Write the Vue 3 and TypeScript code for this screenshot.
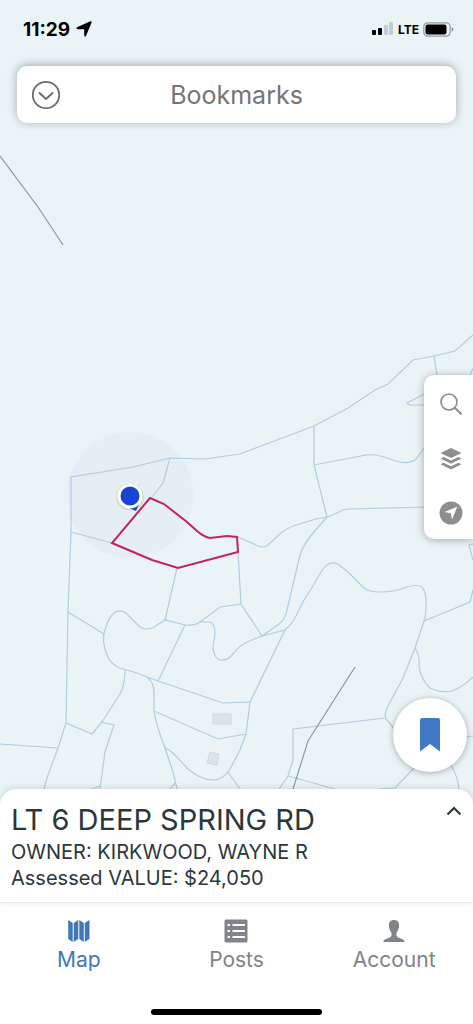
<script setup lang="ts">
import { ref } from 'vue'

interface Tab {
  id: string
  label: string
}

const tabs: Tab[] = [
  { id: 'map', label: 'Map' },
  { id: 'posts', label: 'Posts' },
  { id: 'account', label: 'Account' },
]
const activeTab = ref('map')

const parcelLines: string[] = [
  'M44 789L47 778L58 748L66 723L68 610L71 532V477L133 467L170 458L205 459L240 454L314 426L348 408L375 390L388 384L413 360L434 356L455 351L473 335',
  'M434 356L437 375',
  'M473 368L470 375',
  'M430 391L407 403Q408 405 412 405H430',
  'M314 426V465L327 517',
  'M314 465L366 455Q376 454 384 457L396 461Q409 465 416 459L430 440',
  'M430 507L348 509Q343 509 339 512L328 517L316 519L296 525Q287 528 281 533L268 545Q263 549 256 545L238 537',
  'M327 517L313 533Q303 545 300 555L287 610Q285 620 279 624L262 636',
  'M238 552L241 604L262 636',
  'M241 604L220 607L200 622Q195 626 185 625L165 620L154 627Q147 631 140 627L128 615Q121 608 114 613Q108 618 105 630Q101 640 107 655Q110 664 120 668L137 673L158 681L223 703L250 702',
  'M165 620L177 568',
  'M185 625L158 681',
  'M200 622H210Q215 624 215 633L213 648Q214 658 220 660Q227 661 232 655Q240 645 247 642L262 636L285 630',
  'M285 630L250 702L246 734L240 750L230 769Q223 780 213 780Q202 780 189 770L174 754Q170 750 165 748',
  'M285 630Q292 624 296 616Q302 602 311 589L323 569Q330 560 338 564L349 573L364 588Q369 592 380 592Q395 592 407 587Q417 584 422 587Q427 593 426 607Q426 616 424 621L415 648L403 678L388 706Q384 713 386 719L396 731',
  'M424 621L470 602L473 590',
  'M473 560L469 545L473 544',
  'M415 648Q420 655 419 666Q421 680 430 688Q440 693 452 691Q463 687 473 677',
  'M385 718L293 729V760L288 776L279 789',
  'M288 776L335 789',
  'M228 772L240 789',
  'M380 789L395 788L415 767',
  'M450 764Q458 776 459 789',
  'M465 737L473 736',
  'M71 532L112 543',
  'M68 612L104 634',
  'M66 723L92 734L102 722L120 694Q125 685 125 670',
  'M101 722L114 725L105 752L100 789',
  'M91 789L100 786',
  'M0 744L58 748',
  'M147 677Q154 682 154 693V711Q156 725 165 748L173 772L177 789',
  'M170 789L175 783',
  'M154 711L218 739L246 734',
  'M170 458L163 483L152 497',
]
</script>

<template>
  <div class="app">
    <main class="map-area">
      <svg class="map" viewBox="0 0 473 805" preserveAspectRatio="xMidYMax slice" role="img" aria-label="Parcel map">
        <circle class="accuracy" cx="130" cy="495" r="63" />
        <path v-for="line in parcelLines" :key="line" class="parcel" :d="line" />
        <path class="building" d="M213 714h18v10h-18zM210 752l9 2l-2 11l-10 -2z" />
        <path class="road" d="M0 156L38 207L63 245M355 667L308 741L293 789" />
        <circle class="dot-shadow" cx="130" cy="497" r="14" />
        <path class="heading" d="M129 508L136 511L139 504Z" />
        <circle class="dot" cx="130" cy="496" r="11" />
        <path class="selected" d="M150 498L164 504L187 522L197 531Q204 537 210 538L227 536L237 537L238 552L178 568L152 560L112 543Z" />
      </svg>

      <div class="overlay">
        <div class="status">
          <div class="status-group">
            <span class="time">11:29</span>
            <svg width="16" height="16" viewBox="0 0 16 16" aria-hidden="true">
              <path d="M14.4.3Q16 0 15.6 1.6L10 15Q9 16.3 8.200 14.700V8.200H1.500Q-.4 7.500 1 6.300Z" />
            </svg>
          </div>
          <div class="status-group status-right">
            <svg width="22" height="14" viewBox="0 0 22 14" aria-hidden="true">
              <rect x="0" y="8" width="4" height="5" rx="1" />
              <rect x="6" y="6" width="4" height="7" rx="1" />
              <rect class="faint" x="12" y="3" width="4" height="10" rx="1" />
              <rect class="faint" x="17" y="0" width="4" height="13" rx="1" />
            </svg>
            <span class="network">LTE</span>
            <svg width="31" height="15" viewBox="0 0 31 15" aria-hidden="true">
              <rect x=".8" y=".8" width="26.400" height="13.400" rx="4" fill="none" stroke="#939c9f" stroke-width="1.200" />
              <rect x="2.500" y="2.500" width="21" height="10" rx="2.200" />
              <path d="M28.800 5q3 2.500 0 5z" fill="#7d8588" />
            </svg>
          </div>
        </div>

        <header class="title-bar">
          <button class="plain" type="button" aria-label="Expand bookmarks">
            <svg width="30" height="30" viewBox="0 0 30 30" aria-hidden="true">
              <circle cx="15" cy="15" r="13.200" fill="none" stroke="#6c6c6c" stroke-width="1.800" />
              <path d="M8.500 13L15 19L21.500 13" fill="none" stroke="#6c6c6c" stroke-width="2" stroke-linecap="round" stroke-linejoin="round" />
            </svg>
          </button>
          <h1>Bookmarks</h1>
        </header>
      </div>

      <div class="tools">
        <button class="plain" type="button" aria-label="Search">
          <svg width="24" height="24" viewBox="0 0 24 24" aria-hidden="true">
            <circle cx="10" cy="10" r="8" fill="none" stroke="#8b8b8b" stroke-width="1.600" />
            <path d="M15.500 15.500L22.500 22.300" stroke="#8b8b8b" stroke-width="2" />
          </svg>
        </button>
        <button class="plain" type="button" aria-label="Layers">
          <svg width="24" height="24" viewBox="0 0 24 24" fill="#8e8e8e" aria-hidden="true">
            <path d="M12 1L22.500 6L12 11L1.500 6Z" />
            <path d="M1.500 11.500L4.500 10L12 13.600L19.500 10L22.500 11.500L12 16.700Z" />
            <path d="M1.500 17.200L4.500 15.700L12 19.300L19.500 15.700L22.500 17.200L12 22.400Z" />
          </svg>
        </button>
        <button class="plain" type="button" aria-label="Show my location">
          <svg width="24" height="24" viewBox="0 0 24 24" aria-hidden="true">
            <circle cx="12" cy="12" r="11.500" fill="#8e8e8e" />
            <path d="M18.300 5.700L13 18.500L11.800 12.200L5.500 11Z" fill="#fff" />
          </svg>
        </button>
      </div>

      <button class="bookmark" type="button" aria-label="Add bookmark">
        <svg width="20" height="34" viewBox="0 0 20 34" aria-hidden="true">
          <path d="M2 0H18Q20 0 20 2V33.500L10 26L0 33.500V2Q0 0 2 0Z" fill="#4079c5" />
        </svg>
      </button>
    </main>

    <section class="sheet">
      <div>
        <h2>LT 6 DEEP SPRING RD</h2>
        <p>OWNER: KIRKWOOD, WAYNE R</p>
        <p>Assessed VALUE: $24,050</p>
      </div>
      <button class="plain expand" type="button" aria-label="Show parcel details">
        <svg width="16" height="10" viewBox="0 0 16 10" aria-hidden="true">
          <path d="M1.500 8.500L8 2L14.500 8.500" fill="none" stroke="#2b373b" stroke-width="2" />
        </svg>
      </button>
    </section>

    <nav class="tabs">
      <button
        v-for="tab in tabs"
        :key="tab.id"
        class="plain tab"
        :class="{ active: activeTab === tab.id }"
        type="button"
        @click="activeTab = tab.id"
      >
        <svg v-if="tab.id === 'map'" width="24" height="24" viewBox="0 0 24 24" fill="currentColor" aria-hidden="true">
          <path d="M1.200 1L5.700 4V23L1.200 20ZM6.700 4L11.300 1V20L6.700 23ZM12.300 1L16.800 4V23L12.300 20ZM17.800 4L22.500 1V20L17.800 23Z" />
        </svg>
        <svg v-else-if="tab.id === 'posts'" width="24" height="24" viewBox="0 0 24 24" aria-hidden="true">
          <rect x=".5" y=".5" width="23" height="23" rx="1.500" fill="currentColor" />
          <path d="M8.500 6H21M8.500 12H21M8.500 18H21M3.500 6H6M3.500 12H6M3.500 18H6" stroke="#fff" stroke-width="1.800" />
        </svg>
        <svg v-else width="24" height="24" viewBox="0 0 24 24" fill="currentColor" aria-hidden="true">
          <path d="M12 1C15.500 1 17.300 3.300 17.100 6.500C17 9.500 16 11.500 14.700 13.500C14.200 15 14.300 16.600 15 17.500C16.500 19.800 22.700 19.600 22.700 23H1.300C1.300 19.600 7.500 19.800 9 17.500C9.700 16.600 9.800 15 9.300 13.500C8 11.500 7 9.500 6.900 6.500C6.700 3.300 8.500 1 12 1Z" />
        </svg>
        <span>{{ tab.label }}</span>
      </button>
    </nav>
    <div class="home"><span></span></div>
  </div>
</template>

<style>
body {
  background: #fff;
}
</style>

<style scoped>
.app {
  min-height: 100vh;
  display: flex;
  flex-direction: column;
  font-family: Inter, "Liberation Sans", sans-serif;
  color: #2b373b;
}

h1,
h2,
p {
  margin: 0;
  font-weight: 400;
}

svg {
  display: block;
  flex: none;
}

.plain {
  padding: 0;
  border: 0;
  background: none;
  color: inherit;
  font: inherit;
}

.map-area {
  position: relative;
  flex: 1;
  min-height: 640px;
  overflow: hidden;
  background: #eaf3f6;
}

.map {
  position: absolute;
  inset: 0;
  width: 100%;
  height: 100%;
}

.parcel {
  fill: none;
  stroke: #b0cde0;
  stroke-width: 1.2;
}

.building {
  fill: #dde4e6;
  stroke: #cfd8dc;
  stroke-width: 1;
}

.road {
  fill: none;
  stroke: #859499;
  stroke-width: 1.1;
}

.accuracy {
  fill: #e5eef5;
}

.dot-shadow {
  fill: #d3dcd9;
}

.heading {
  fill: #1b4bb5;
}

.dot {
  fill: #1744d6;
  stroke: #fff;
  stroke-width: 3;
}

.selected {
  fill: none;
  stroke: #c2245e;
  stroke-width: 2;
}

.overlay {
  position: relative;
}

.status {
  height: 58px;
  padding: 0 19px 0 23px;
  display: flex;
  align-items: center;
  justify-content: space-between;
  color: #000;
}

.status-group {
  display: flex;
  align-items: center;
  gap: 6px;
}

.status-right {
  gap: 4px;
}

.time {
  font-size: 19px;
  font-weight: 700;
}

.network {
  font-size: 12px;
  font-weight: 700;
}

.faint {
  fill: #c3ccd0;
}

.title-bar {
  margin: 8px 17px 0;
  height: 57px;
  padding: 0 14px;
  display: grid;
  grid-template-columns: 30px 1fr 30px;
  align-items: center;
  box-sizing: border-box;
  border-radius: 10px;
  background: #fff;
  box-shadow: 0 -1px 10px rgba(0, 0, 0, 0.3);
}

h1 {
  font-size: 25px;
  text-align: center;
  color: #757575;
}

.tools {
  position: absolute;
  right: 0;
  bottom: 266px;
  width: 49px;
  height: 164px;
  padding: 17px 10px 14px 15px;
  display: flex;
  flex-direction: column;
  justify-content: space-between;
  box-sizing: border-box;
  border-radius: 10px 0 0 10px;
  background: #fff;
  box-shadow: 0 1px 8px rgba(0, 0, 0, 0.3);
}

.bookmark {
  position: absolute;
  right: 6px;
  bottom: 33px;
  width: 74px;
  height: 74px;
  padding: 0;
  display: grid;
  place-items: center;
  border: 0;
  border-radius: 50%;
  background: #fff;
  box-shadow: 0 1px 6px rgba(0, 0, 0, 0.3);
}

.sheet {
  position: relative;
  margin-top: -16px;
  padding: 12px 11px 11px;
  display: flex;
  justify-content: space-between;
  align-items: flex-start;
  border-bottom: 1px solid #e6eaeb;
  border-radius: 16px 16px 0 0;
  background: #fff;
  box-shadow: 0 -1px 6px rgba(0, 0, 0, 0.12);
}

h2 {
  font-size: 29px;
  line-height: 38px;
}

.sheet p {
  font-size: 20px;
  line-height: 26px;
}

.expand {
  padding-top: 5px;
}

.tabs {
  padding-top: 16px;
  display: grid;
  grid-template-columns: repeat(3, 1fr);
  background: #fff;
}

.tab {
  display: flex;
  flex-direction: column;
  align-items: center;
  gap: 3px;
  font-size: 21px;
  line-height: 28px;
  color: #808388;
}

.active {
  color: #4078b5;
}

.home {
  height: 50px;
  padding-bottom: 9px;
  display: flex;
  align-items: flex-end;
  justify-content: center;
  box-sizing: border-box;
}

.home span {
  width: 36%;
  height: 6px;
  border-radius: 3px;
  background: #000;
}
</style>
